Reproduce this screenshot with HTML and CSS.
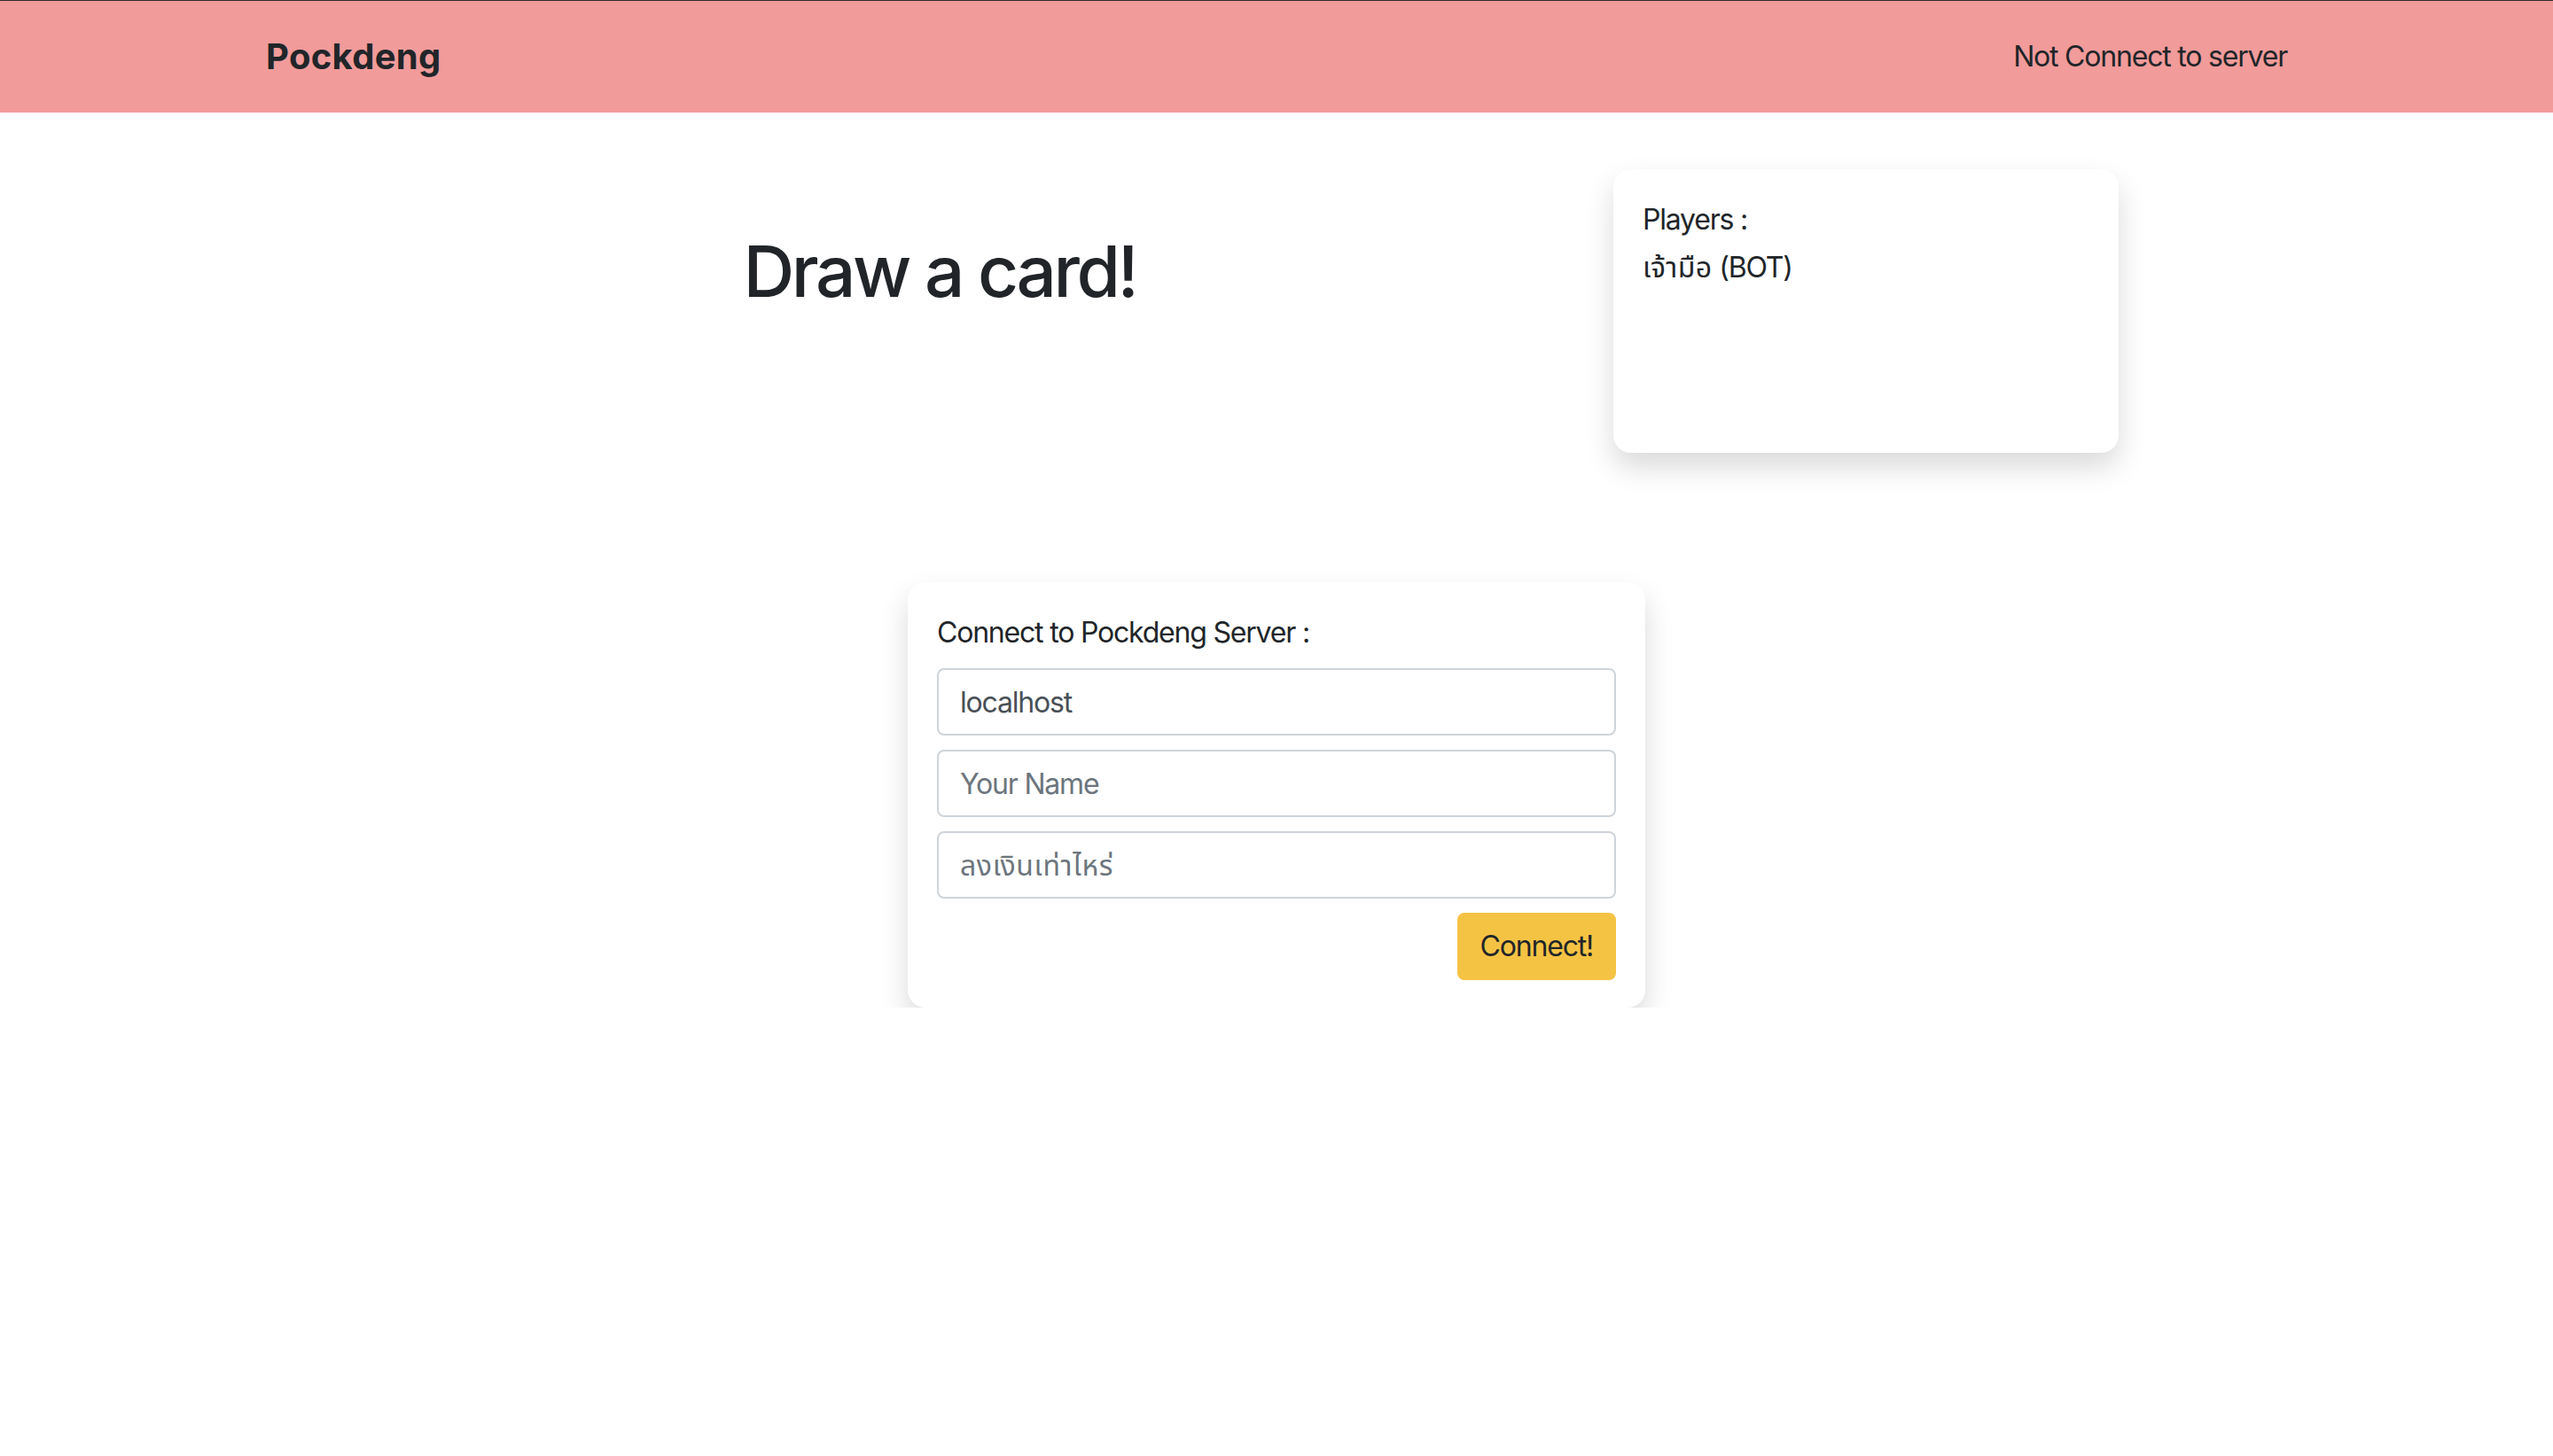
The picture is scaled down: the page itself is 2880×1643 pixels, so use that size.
FILE: index.html
```html
<!DOCTYPE html>
<html lang="th">
<head>
<meta charset="utf-8">
<title>Pockdeng</title>
<link rel="stylesheet" href="styles.css">
</head>
<body>
<nav class="navbar">
  <div class="nav-inner">
    <span class="brand">Pockdeng</span>
    <span class="status">Not Connect to server</span>
  </div>
</nav>
<main class="container">
  <div class="top-row">
    <div class="col-main">
      <h1 class="title">Draw a card!</h1>
    </div>
    <div class="col-side">
      <div class="players-card">
        <div class="players-label">Players :</div>
        <div class="player"><span class="thai">เจ้ามือ</span> (BOT)</div>
      </div>
    </div>
  </div>
  <form class="connect-card">
    <div class="connect-label">Connect to Pockdeng Server :</div>
    <input class="form-control" type="text" value="localhost">
    <input class="form-control" type="text" placeholder="Your Name">
    <input class="form-control thai-input" type="text" placeholder="ลงเงินเท่าไหร่">
    <div class="actions">
      <button class="btn-connect" type="button">Connect!</button>
    </div>
  </form>
</main>
</body>
</html>
```
FILE: styles.css
```css
* { box-sizing: border-box; }
html, body { margin: 0; padding: 0; background: #ffffff; }
body {
  font-family: Inter, "Noto Sans Thai", "Noto Sans", "DejaVu Sans", sans-serif;
  font-size: 32px;
  line-height: 48px;
  letter-spacing: -1.2px;
  color: #212529;
}
.navbar {
  border-top: 1px solid #2b2b2b;
  background: #f19b9a;
  height: 127px;
}
.nav-inner {
  width: 2280px;
  height: 100%;
  margin: 0 auto;
  display: flex;
  justify-content: space-between;
  align-items: center;
}
.brand {
  font-size: 40px;
  font-weight: 700;
  line-height: 60px;
  letter-spacing: 0.3px;
}
.status {
  font-size: 32px;
  line-height: 48px;
}
.container {
  width: 2280px;
  margin: 0 auto;
}
.top-row {
  display: flex;
  margin-top: 64px;
}
.col-main {
  flex: 0 0 1520px;
  text-align: center;
}
.title {
  margin: 67px 0 0;
  font-size: 80px;
  font-weight: 500;
  line-height: 96px;
  letter-spacing: -3.4px;
}
.col-side {
  flex: 0 0 760px;
}
.players-card {
  width: 570px;
  height: 320px;
  padding: 33px;
  background: #fff;
  border-radius: 20px;
  box-shadow: 0 16px 32px rgba(0, 0, 0, 0.15);
}
.players-label { margin-bottom: 6px; }
.thai { letter-spacing: 0.4px; }
.connect-card {
  width: 832px;
  margin: 146px auto 0;
  padding: 33px 33px 31px;
  background: #fff;
  border-radius: 20px;
  box-shadow: 0 16px 32px rgba(0, 0, 0, 0.15);
  display: flex;
  flex-direction: column;
  gap: 16px;
}
.connect-label { line-height: 48px; }
.form-control {
  display: block;
  width: 100%;
  height: 76px;
  padding: 12px 24px;
  font-family: Inter, "Noto Sans Thai", "Noto Sans", sans-serif;
  font-size: 32px;
  line-height: 48px;
  letter-spacing: -1.2px;
  color: #495057;
  background: #fff;
  border: 2px solid #ced4da;
  border-radius: 8px;
  outline: none;
  margin: 0;
}
.thai-input { letter-spacing: 0.6px; }
.form-control::placeholder { color: #6c757d; opacity: 1; }
.actions {
  display: flex;
  justify-content: flex-end;
}
.btn-connect {
  height: 76px;
  padding: 12px 24px;
  font-family: Inter, "Noto Sans", sans-serif;
  font-size: 32px;
  line-height: 48px;
  letter-spacing: -1.2px;
  color: #212529;
  background: #f5c344;
  border: 2px solid #f5c344;
  border-radius: 8px;
  cursor: pointer;
}
```
